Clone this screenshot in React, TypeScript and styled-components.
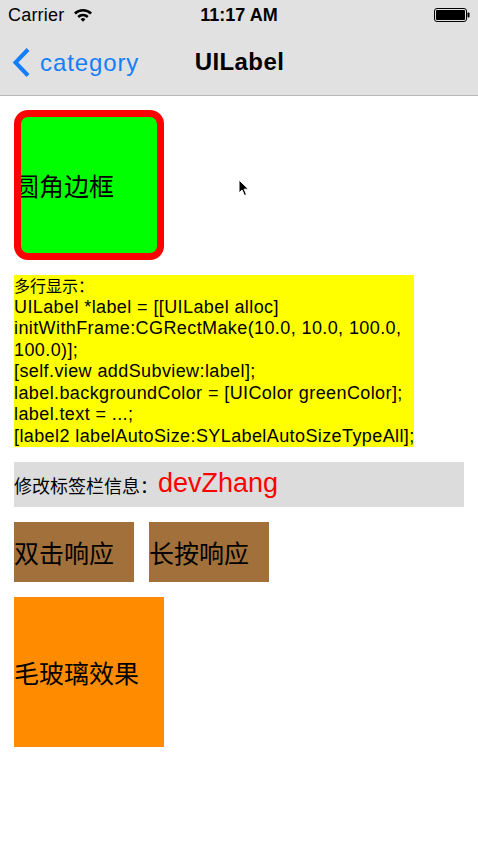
import * as React from 'react';
import styled, { createGlobalStyle } from 'styled-components';

const GlobalStyle = createGlobalStyle`
	html, body {
		margin: 0;
		padding: 0;
		background: #ffffff;
	}
	body {
		font-family: "Liberation Sans", "Noto Sans CJK SC", sans-serif;
	}
`;

const Page = styled.div`
	width: 478px;
	height: 848px;
	position: relative;
	overflow: hidden;
	background: #ffffff;
`;

const Header = styled.div`
	background: #e1e1e1;
	border-bottom: 1px solid #b9b9b9;
	height: 95px;
	display: flex;
	flex-direction: column;
`;

const StatusBar = styled.div`
	height: 30px;
	display: flex;
	align-items: center;
	padding: 0 8px;
	position: relative;
	font-size: 18px;
	color: #000;
`;

const Carrier = styled.div`
	display: flex;
	align-items: center;
	gap: 9px;
	letter-spacing: 0.2px;
`;

const Clock = styled.div`
	position: absolute;
	left: 0;
	right: 0;
	text-align: center;
	font-weight: bold;
	font-size: 18px;
	pointer-events: none;
`;

const Battery = styled.div`
	margin-left: auto;
	display: flex;
	align-items: center;
`;

const NavBar = styled.div`
	flex: 1;
	display: flex;
	align-items: center;
	position: relative;
	padding-left: 12px;
`;

const BackButton = styled.div`
	display: flex;
	align-items: center;
	gap: 9px;
	color: #157efb;
	font-size: 24px;
	letter-spacing: 0.9px;
`;

const NavTitle = styled.div`
	position: absolute;
	left: 1px;
	right: 0;
	text-align: center;
	font-weight: bold;
	font-size: 24px;
	letter-spacing: 0.4px;
	pointer-events: none;
	padding-bottom: 2px;
`;

const Content = styled.div`
	display: flex;
	flex-direction: column;
	align-items: flex-start;
	gap: 15px;
	padding: 14px 14px 0;
`;

const RoundBox = styled.div`
	box-sizing: border-box;
	width: 150px;
	height: 150px;
	border: 7px solid #ff0000;
	border-radius: 14px;
	background: #00ff00;
	overflow: hidden;
	display: flex;
	align-items: center;
`;

const CjkLabel = styled.span<{ $shift?: number }>`
	font-family: "Noto Sans CJK SC", sans-serif;
	font-size: 25px;
	color: #000;
	white-space: nowrap;
	margin-left: ${p => (p.$shift ? `${p.$shift}px` : '0')};
`;

const CodeBox = styled.div`
	background: #ffff00;
	width: 400px;
	font-size: 18px;
	line-height: 21.5px;
	color: #000;
`;

const CodeLine = styled.div<{ $cjk?: boolean }>`
	white-space: nowrap;
	font-family: ${p => (p.$cjk ? '"Noto Sans CJK SC", sans-serif' : '"Liberation Sans", sans-serif')};
	font-size: ${p => (p.$cjk ? '16px' : '18px')};
	letter-spacing: ${p => (p.$cjk ? '0' : '0.4px')};
`;

const InfoRow = styled.div`
	width: 450px;
	height: 45px;
	background: #dcdcdc;
	display: flex;
	align-items: center;
	gap: 0;
`;

const InfoLabel = styled.span`
	font-family: "Noto Sans CJK SC", sans-serif;
	font-size: 18px;
	color: #000;
`;

const InfoValue = styled.span`
	font-family: "Liberation Sans", sans-serif;
	font-size: 27px;
	color: #ff0000;
	padding-bottom: 2px;
`;

const ButtonRow = styled.div`
	display: flex;
	gap: 15px;
`;

const ActionButton = styled.div`
	width: 120px;
	height: 60px;
	background: #a2703b;
	display: flex;
	align-items: center;
`;

const BlurBox = styled.div`
	width: 150px;
	height: 150px;
	background: #ff8c00;
	display: flex;
	align-items: center;
`;

const Cursor = styled.svg`
	position: absolute;
	left: 238px;
	top: 179px;
`;

const codeLines = [
	'UILabel *label = [[UILabel alloc]',
	'initWithFrame:CGRectMake(10.0, 10.0, 100.0,',
	'100.0)];',
	'[self.view addSubview:label];',
	'label.backgroundColor = [UIColor greenColor];',
	'label.text = ...;',
	'[label2 labelAutoSize:SYLabelAutoSizeTypeAll];',
];

const WifiIcon = () => (
	<svg width="20" height="14" viewBox="0 0 20 14">
		<path d="M1 4.6 A13 13 0 0 1 19 4.6 L17.2 6.5 A10.4 10.4 0 0 0 2.8 6.5 Z" fill="#000" />
		<path d="M4.3 8 A8.2 8.2 0 0 1 15.7 8 L13.9 9.9 A5.6 5.6 0 0 0 6.1 9.9 Z" fill="#000" />
		<path d="M7.6 11.3 A3.4 3.4 0 0 1 12.4 11.3 L10 13.8 Z" fill="#000" />
	</svg>
);

const BatteryIcon = () => (
	<svg width="36" height="14" viewBox="0 0 36 14">
		<rect x="0.5" y="0.5" width="32" height="13" rx="2.5" fill="none" stroke="#000" strokeWidth="1" />
		<rect x="2" y="2" width="29" height="10" rx="1" fill="#000" />
		<rect x="33.5" y="4.5" width="2" height="5" rx="0.8" fill="#000" />
	</svg>
);

const BackChevron = () => (
	<svg width="19" height="31" viewBox="0 0 19 31">
		<path d="M16 2.5 L3.5 15.5 L16 28.5" fill="none" stroke="#157efb" strokeWidth="4" strokeLinecap="butt" strokeLinejoin="miter" />
	</svg>
);

const App: React.FC = () => {
	return (
		<Page>
			<GlobalStyle />
			<Header>
				<StatusBar>
					<Carrier>
						Carrier
						<WifiIcon />
					</Carrier>
					<Clock>11:17 AM</Clock>
					<Battery>
						<BatteryIcon />
					</Battery>
				</StatusBar>
				<NavBar>
					<BackButton>
						<BackChevron />
						category
					</BackButton>
					<NavTitle>UILabel</NavTitle>
				</NavBar>
			</Header>
			<Content>
				<RoundBox>
					<CjkLabel $shift={-7}>圆角边框</CjkLabel>
				</RoundBox>
				<CodeBox>
					<CodeLine $cjk>多行显示：</CodeLine>
					{codeLines.map((line, idx) => (
						<CodeLine key={idx}>{line}</CodeLine>
					))}
				</CodeBox>
				<InfoRow>
					<InfoLabel>修改标签栏信息：</InfoLabel>
					<InfoValue>devZhang</InfoValue>
				</InfoRow>
				<ButtonRow>
					<ActionButton>
						<CjkLabel>双击响应</CjkLabel>
					</ActionButton>
					<ActionButton>
						<CjkLabel>长按响应</CjkLabel>
					</ActionButton>
				</ButtonRow>
				<BlurBox>
					<CjkLabel>毛玻璃效果</CjkLabel>
				</BlurBox>
			</Content>
			<Cursor width="12" height="18" viewBox="0 0 12 18">
				<path d="M1 1 L1 14 L4 11 L6.5 16.5 L8.5 15.6 L6.2 10.2 L10.5 10.2 Z" fill="#000" stroke="#fff" strokeWidth="1" />
			</Cursor>
		</Page>
	);
};

export default App;
